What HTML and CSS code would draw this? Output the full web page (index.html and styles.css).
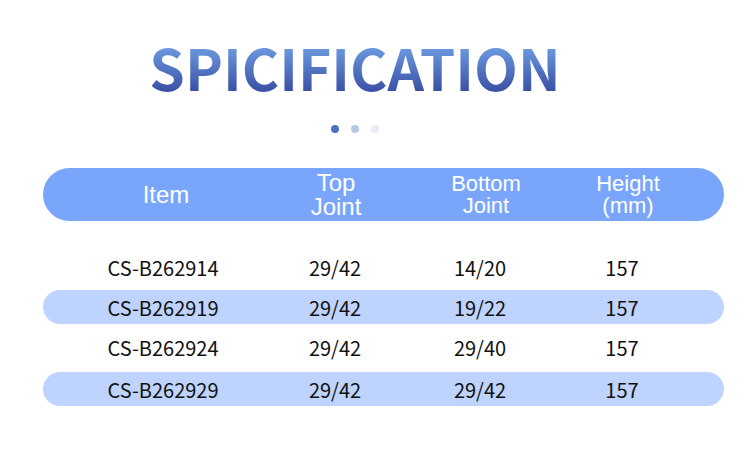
FILE: index.html
```html
<!DOCTYPE html>
<html>
<head>
<meta charset="utf-8">
<link rel="stylesheet" href="styles.css">
</head>
<body>
<div class="page">
  <div class="heading">
    <h1 class="title">SPICIFICATION</h1>
    <div class="dots"><span class="dot d1"></span><span class="dot d2"></span><span class="dot d3"></span></div>
  </div>
  <div class="thead">
    <div class="th th-big">Item</div>
    <div class="th th-big">Top<br>Joint</div>
    <div class="th">Bottom<br>Joint</div>
    <div class="th">Height<br>(mm)</div>
  </div>
  <div class="tbody">
    <div class="row"><span>CS-B262914</span><span>29/42</span><span>14/20</span><span>157</span></div>
    <div class="row band"><span>CS-B262919</span><span>29/42</span><span>19/22</span><span>157</span></div>
    <div class="row"><span>CS-B262924</span><span>29/42</span><span>29/40</span><span>157</span></div>
    <div class="row band last"><span>CS-B262929</span><span>29/42</span><span>29/42</span><span>157</span></div>
  </div>
</div>
</body>
</html>
```
FILE: styles.css
```css
html, body {
  margin: 0;
  padding: 0;
  background: #ffffff;
}
.page {
  width: 750px;
  height: 454px;
  overflow: hidden;
  display: flex;
  flex-direction: column;
}
.heading {
  display: flex;
  flex-direction: column;
  align-items: center;
  padding-right: 40px;
  padding-top: 30px;
}
.title {
  margin: 0;
  font-family: "Noto Sans CJK SC", "Noto Sans", sans-serif;
  font-weight: 700;
  font-size: 57px;
  line-height: 72px;
  letter-spacing: 0;
  background: linear-gradient(180deg, #6f9ee3 20%, #3a51a5 85%);
  -webkit-background-clip: text;
  background-clip: text;
  color: transparent;
}
.dots {
  display: flex;
  gap: 12px;
  margin-top: 23px;
}
.dot {
  width: 8px;
  height: 8px;
  border-radius: 50%;
}
.d1 { background: #4b72c5; }
.d2 { background: #b8c7e8; }
.d3 { background: #e7ecf7; }
.thead {
  margin: 35px 26px 0 43px;
  height: 53px;
  border-radius: 27px;
  background: #79a6fb;
  display: grid;
  grid-template-columns: 246px 94px 206px 78px 1fr;
  align-items: center;
}
.th {
  color: #ffffff;
  text-align: center;
  font-family: "Liberation Sans", Arial, sans-serif;
  font-size: 22px;
  line-height: 22px;
}
.th-big {
  font-size: 24px;
  line-height: 24px;
}
.tbody {
  margin: 29px 26px 0 43px;
  display: flex;
  flex-direction: column;
  gap: 6px;
}
.row {
  height: 34px;
  border-radius: 17px;
  display: grid;
  grid-template-columns: 240px 104px 186px 98px 1fr;
  align-items: center;
  font-family: "Noto Sans CJK SC", "Noto Sans", sans-serif;
  font-size: 20px;
  color: #111111;
}
.row span {
  text-align: center;
}
.band {
  background: #bed3fd;
}
.last {
  margin-top: 2px;
}
```
